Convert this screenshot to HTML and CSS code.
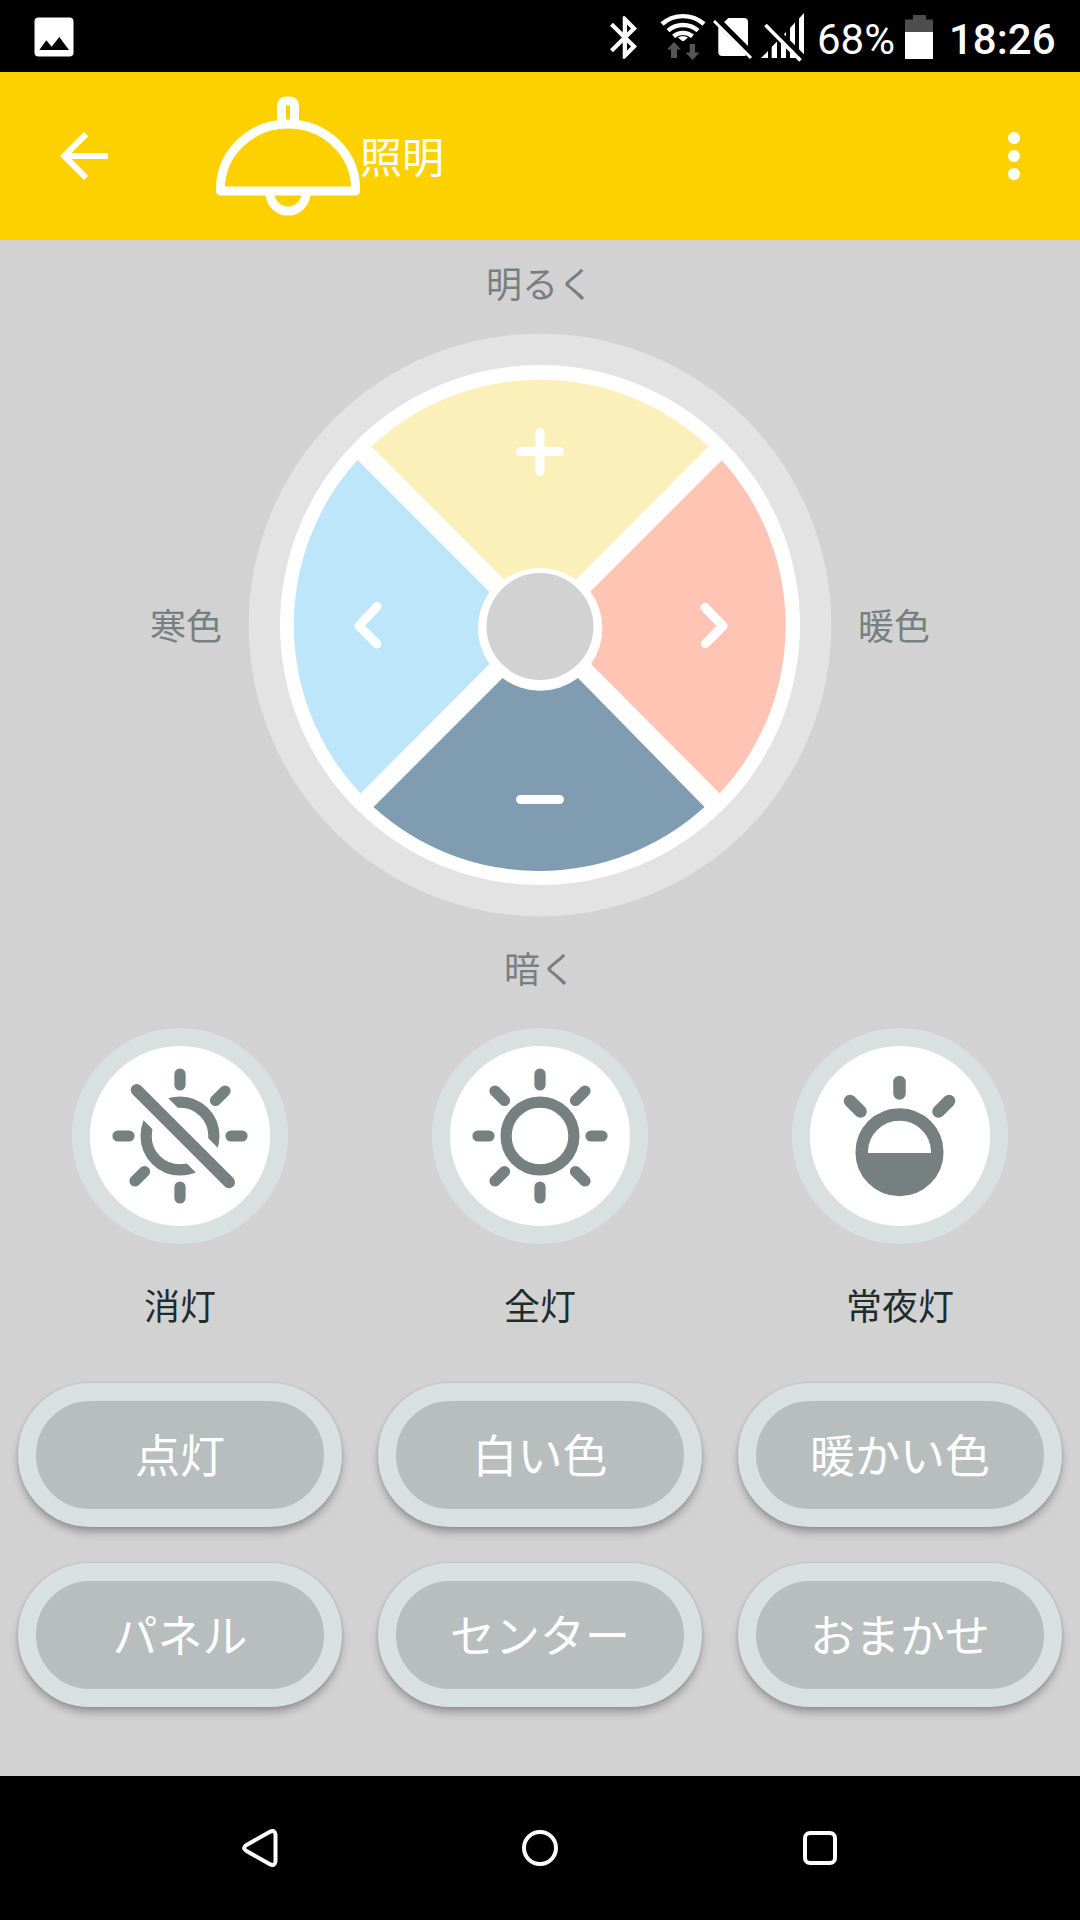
FILE: index.html
```html
<!DOCTYPE html>
<html lang="ja">
<head>
<meta charset="utf-8">
<title>照明</title>
<link rel="stylesheet" href="styles.css">
</head>
<body>
<div class="screen">
  <div class="status">
    <svg class="status-picture" width="40" height="40" viewBox="34 17 40 40">
      <path fill="#fff" fill-rule="evenodd" d="M39 17.500H69.500a4 4 0 0 1 4 4V52.500a4 4 0 0 1-4 4H38.500a4 4 0 0 1-4-4V21.500a4 4 0 0 1 4-4zM39.300 50H69L59.300 37 51.700 46.700 46.300 40.300z"/>
    </svg>
    <div class="status-right">
      <svg width="27" height="43" viewBox="5 2 12.71 20"><path fill="#fff" d="M17.71 7.71L12 2h-1v7.590L6.410 5 5 6.410 10.590 12 5 17.590 6.410 19 11 14.410V22h1l5.710-5.710-4.300-4.290 4.300-4.290zM13 5.830l1.880 1.880L13 9.590V5.830zm1.880 10.460L13 18.170v-3.760l1.880 1.880z"/></svg>
      <svg class="i-wifi" width="46" height="48" viewBox="660 13 46 48">
        <g fill="none" stroke="#fff" stroke-width="4.400">
          <path d="M662 24a32 32 0 0 1 42 0"/>
          <path d="M668 30.600a23 23 0 0 1 30 0"/>
          <path d="M673.500 36.300a15 15 0 0 1 19 0"/>
        </g>
        <path fill="#fff" d="M678 37.600q5-3.300 10 0l-3.500 3q-1.500 1-3 0z"/>
        <path fill="#555" d="M674 42l7 7.500h-4V58h-6v-8.500h-4zM692.500 60l-7-7.500h4.200V44h5.300v8.500h4.500z"/>
      </svg>
      <svg class="i-sim" width="40" height="42" viewBox="713 18 40 42">
        <path fill="#fff" d="M728.500 18H744a4 4 0 0 1 4 4V46L724 22zM718.300 27L746.500 55a4 4 0 0 1-2.500 1H722.300a4 4 0 0 1-4-4z"/>
        <path stroke="#fff" stroke-width="3" d="M714 21L751 58"/>
      </svg>
      <svg class="i-signal" width="44" height="50" viewBox="761 12 44 50">
        <path fill="#fff" d="M761 58L768 51V58zM771.700 47V58H777V41.500zM781 37.500V58H786V32zM790 28V58H795V22.500zM799 18.500V58H804V13z"/>
        <path stroke="#000" stroke-width="5" d="M768.800 22.700L806 59.900"/>
        <path stroke="#fff" stroke-width="3.600" d="M765.500 25L800.500 60.500"/>
      </svg>
      <span class="percent">68%</span>
      <svg class="i-battery" width="28" height="44" viewBox="905 15 28 44">
        <path fill="#4d4d4d" d="M913 15h13v4.500h7V32H905V19.500h8z"/><path fill="#fff" d="M905 32h28v27h-28z"/>
      </svg>
      <span class="clock">18:26</span>
    </div>
  </div>

  <header class="appbar">
    <svg width="72" height="72" viewBox="0 0 24 24"><path fill="#fff" d="M20 11H7.830l5.590-5.590L12 4l-8 8 8 8 1.410-1.410L7.830 13H20z"/></svg>
    <svg class="lamp" width="144" height="120" viewBox="216 96 144 120">
      <g fill="none" stroke="#fff" stroke-width="9" stroke-linejoin="round">
        <path d="M220.500 188.500v2.500h135v-2.500a67.500 64.500 0 0 0-135 0z"/>
        <path d="M281.500 122v-16q0-5 5-5h3q5 0 5 5v16"/>
        <path d="M270 193a18 18 0 0 0 36 0"/>
      </g>
    </svg>
    <h1>照明</h1>
    <svg class="more" width="72" height="72" viewBox="0 0 24 24" fill="#fff"><circle cx="12" cy="6" r="2"/><circle cx="12" cy="12" r="2"/><circle cx="12" cy="18" r="2"/></svg>
  </header>

  <main>
    <div class="dial">
      <span class="hint bright">明るく</span>
      <span class="hint cool">寒色</span>
      <svg class="wheel" width="584" height="584" viewBox="248 333 584 584">
        <circle cx="540" cy="625" r="291.300" fill="#e3e3e3"/>
        <circle cx="540" cy="625" r="260" fill="#fff"/>
        <path fill="#fcf0ba" d="M371.500 446.500A246 246 0 0 1 708.500 446.500L576 579.500A62 62 0 0 0 504 579.500z"/>
        <path fill="#bde6fa" d="M357.500 460A246 246 0 0 0 360.500 793.500L489.500 664A62 62 0 0 1 489.500 592z"/>
        <path fill="#ffc4b3" d="M721.700 460.300A246 246 0 0 1 719.700 793.500L591 664A62 62 0 0 0 590.500 591.500z"/>
        <path fill="#7f9cb0" d="M373.500 807A246 246 0 0 0 704.500 807L578 678A62 62 0 0 1 502.500 678z"/>
        <circle cx="540" cy="626.500" r="53.500" fill="#d2d2d2"/>
        <g fill="none" stroke="#fff" stroke-width="9" stroke-linecap="round" stroke-linejoin="round">
          <path d="M520.500 451.500h39M540 432.500v39M520.500 799.500h39M377 606.500L359 625.800 377 644M705 607.500L723 626 705.500 643.500"/>
        </g>
      </svg>
      <span class="hint warm">暖色</span>
      <span class="hint dark">暗く</span>
    </div>

    <div class="modes">
      <div class="mode">
        <div class="disc">
          <svg width="180" height="180" viewBox="-90 -90 180 180" fill="none" stroke="#778080" stroke-width="11.200" stroke-linecap="round">
            <circle r="33.900"/>
            <path stroke="#fff" stroke-width="33" stroke-linecap="butt" d="M-43.300-46L49 46.300"/>
            <path d="M0-62v11M0 51v11M-62 0h11M51 0h11M45-45l-9.500 9.500M-45 45l9.500-9.500"/>
            <path stroke-width="12" d="M-43.300-46L49 46.300"/>
          </svg>
        </div>
        <span>消灯</span>
      </div>
      <div class="mode">
        <div class="disc">
          <svg width="180" height="180" viewBox="-90 -90 180 180" fill="none" stroke="#778080" stroke-width="11.200" stroke-linecap="round">
            <circle r="33.900"/>
            <path d="M0-62v11M0 51v11M-62 0h11M51 0h11M45-45l-9.500 9.500M-45 45l9.500-9.500M-45-45l9.500 9.500M45 45l-9.500-9.500"/>
          </svg>
        </div>
        <span>全灯</span>
      </div>
      <div class="mode">
        <div class="disc">
          <svg width="180" height="180" viewBox="-90 -90 180 180" fill="none" stroke="#778080" stroke-width="12.500" stroke-linecap="round">
            <circle cx="-.5" cy="16.200" r="37.800"/>
            <path fill="#778080" stroke="none" d="M-38 17h75a37.500 37.500 0 0 1-75 0z"/>
            <path d="M-.5-54v11.500M-50-35l10.500 10.500M49-35l-10.500 10.500"/>
          </svg>
        </div>
        <span>常夜灯</span>
      </div>
    </div>

    <div class="presets">
      <button>点灯</button><button>白い色</button><button>暖かい色</button>
      <button>パネル</button><button>センター</button><button>おまかせ</button>
    </div>
  </main>

  <nav class="navbar">
    <svg width="48" height="48" viewBox="-24 -24 48 48"><path d="M9.500-16Q14.500-19 15.500-13.500V13.500Q14.500 19 9.500 16L-13.500 3Q-18.500 0-13.500-3z"/></svg>
    <svg width="48" height="48" viewBox="-24 -24 48 48"><circle r="16"/></svg>
    <svg width="48" height="48" viewBox="-24 -24 48 48"><rect x="-15" y="-15" width="30" height="30" rx="5"/></svg>
  </nav>
</div>
</body>
</html>
```
FILE: styles.css
```css
* { box-sizing: border-box; }
body { margin: 0; background: #000; }
svg { display: block; flex: none; }

.screen {
  width: 1080px;
  height: 1920px;
  display: flex;
  flex-direction: column;
  overflow: hidden;
  font-family: "Noto Sans CJK JP", sans-serif;
}

.status {
  height: 72px;
  padding: 0 25px 0 34px;
  display: flex;
  align-items: center;
  justify-content: space-between;
  background: #000;
  color: #fff;
  font-family: Roboto, sans-serif;
  font-size: 42px;
  line-height: 72px;
}
.status-picture { margin-top: 2px; }
.status-right { display: flex; align-items: center; height: 72px; }
.status-right svg { margin-top: 2px; }
.status-right .i-wifi { margin-left: 23px; }
.status-right .i-sim { margin-left: 7px; margin-top: 5px; }
.status-right .i-signal { margin-left: 8px; }
.percent { width: 88px; margin-left: 12px; padding-top: 8px; white-space: nowrap; }
.status-right .i-battery { margin-top: 2px; }
.clock { width: 106px; margin-left: 16px; padding-top: 8px; font-weight: 500; white-space: nowrap; }

.appbar {
  height: 168px;
  padding: 0 30px 0 48px;
  display: flex;
  align-items: center;
  background: #fdd100;
  color: #fff;
}
.lamp { margin-left: 96px; }
.appbar h1 { margin: 0; padding-bottom: 2px; font-size: 42px; font-weight: 400; line-height: 60px; }
.more { margin-left: auto; }

main {
  flex: 1;
  background: #d2d2d2;
}
.dial {
  display: grid;
  grid-template-columns: 248px 584px 248px;
  grid-template-rows: 93px 584px 111px;
  align-items: center;
}
.hint { color: #778080; font-size: 36px; line-height: 52px; }
.bright, .dark { grid-column: 1 / -1; text-align: center; }
.bright { padding-bottom: 10px; }
.dark { padding-bottom: 11px; }
.cool { padding-right: 26px; padding-bottom: 2px; text-align: right; }
.warm { padding-left: 26px; padding-bottom: 2px; }

.modes { display: grid; grid-template-columns: repeat(3, 1fr); }
.mode { display: flex; flex-direction: column; align-items: center; }
.mode span { padding-bottom: 2px; color: #1e2c2c; font-size: 36px; line-height: 120px; }
.disc {
  width: 216px;
  height: 216px;
  border: 18px solid #d9e1e0;
  border-radius: 50%;
  background: #fff;
}

.presets {
  display: grid;
  grid-template-columns: repeat(3, 324px);
  gap: 36px;
  padding: 17px 18px 0;
}
.presets button {
  height: 144px;
  padding: 0 0 3px;
  border: 18px solid #d9e1e0;
  border-radius: 72px;
  background: #b8bebe;
  color: #fff;
  font-family: inherit;
  font-size: 45px;
  line-height: 65px;
  box-shadow: 0 6px 8px -1px rgba(0, 0, 0, .3), 0 0 3px rgba(0, 0, 0, .14);
}

.navbar {
  height: 144px;
  padding: 0 236px;
  display: flex;
  align-items: center;
  justify-content: space-between;
  background: #000;
}
.navbar svg { fill: none; stroke: #fff; stroke-width: 4; stroke-linejoin: round; }
```
